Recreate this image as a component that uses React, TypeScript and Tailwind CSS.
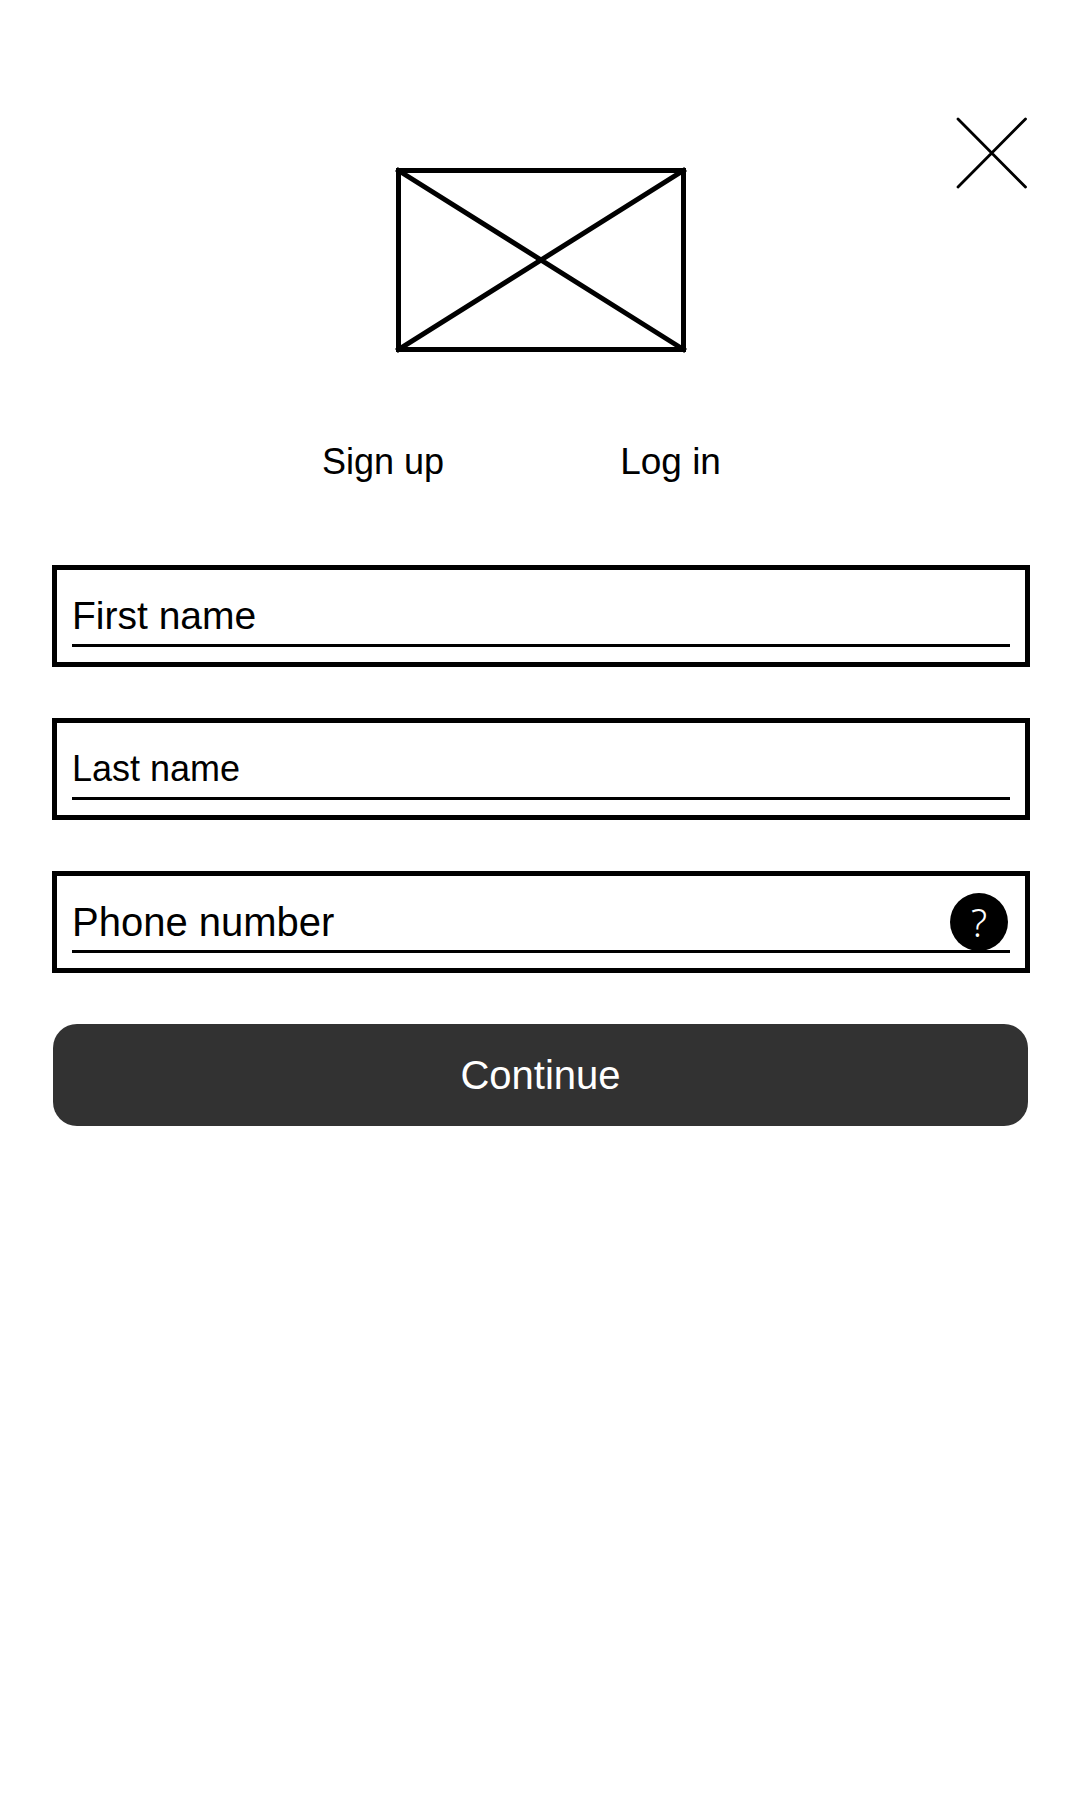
import { useState } from "react";

type FieldProps = {
  id: string;
  label: string;
  type?: string;
  size?: string;
  help?: boolean;
};

function Field({ id, label, type = "text", size = "text-[40px]", help = false }: FieldProps) {
  const [value, setValue] = useState("");
  return (
    <div className="relative border-5 border-black px-[15px] pt-[18px] pb-[15px]">
      <input
        id={id}
        name={id}
        type={type}
        value={value}
        onChange={(e) => setValue(e.target.value)}
        placeholder={label}
        aria-label={label}
        className={`block h-[59px] w-full border-b-3 border-black bg-transparent text-black outline-none placeholder:text-black placeholder:opacity-100 ${size}`}
      />
      {help && (
        <button
          type="button"
          aria-label="Help with phone number"
          className="absolute top-[17px] right-[17px] flex size-[58px] items-center justify-center rounded-full bg-black font-['Noto_Sans',sans-serif] text-[38px] leading-none font-light text-white"
        >
          ?
        </button>
      )}
    </div>
  );
}

export default function App() {
  return (
    <main className="min-h-screen bg-white pt-[117px] pr-[50px] pl-[52px] font-['Liberation_Sans',Arial,sans-serif] text-black">
      <header className="grid grid-cols-[1fr_auto_1fr] items-start">
        <svg
          className="col-start-2 mt-[49px]"
          width="292"
          height="188"
          viewBox="0 0 292 188"
          fill="none"
          stroke="black"
          strokeWidth="5"
          role="img"
          aria-label="Logo"
        >
          <rect x="3.5" y="4.5" width="285" height="179" />
          <path d="M3.5 4.5 288.5 183.5M288.5 4.5 3.5 183.5" strokeLinecap="square" />
        </svg>
        <button type="button" aria-label="Close" className="mr-[2px] justify-self-end">
          <svg width="72" height="72" viewBox="0 0 72 72" fill="none" stroke="black" strokeWidth="2.8" strokeLinecap="round">
            <path d="M2 2 69.5 70M69.5 2 2 70" />
          </svg>
        </button>
      </header>

      <nav className="mt-[88px] flex items-baseline justify-center gap-44 pr-[39px] leading-10">
        <a href="#signup" className="text-[36px]">
          Sign up
        </a>
        <a href="#login" className="text-[37px]">
          Log in
        </a>
      </nav>

      <form className="mt-[83px] flex flex-col gap-[51px]" onSubmit={(e) => e.preventDefault()}>
        <Field id="first-name" label="First name" size="text-[39px]" />
        <Field id="last-name" label="Last name" size="text-[36px]" />
        <Field id="phone" label="Phone number" type="tel" help />
        <button
          type="submit"
          className="mr-[2px] ml-px h-[102px] rounded-3xl bg-[#323232] text-[40px] text-white"
        >
          Continue
        </button>
      </form>
    </main>
  );
}
